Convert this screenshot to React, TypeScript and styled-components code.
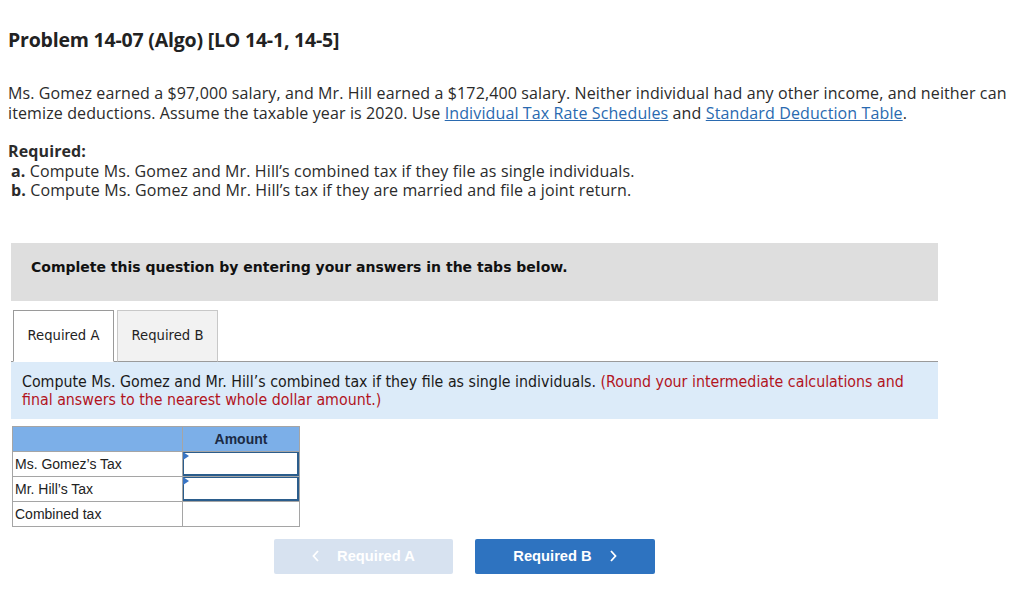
import React, { useState } from "react";
import styled, { createGlobalStyle } from "styled-components";

const GlobalStyle = createGlobalStyle`
	html, body {
		margin: 0;
		padding: 0;
		background: #fff;
	}
	body {
		font-family: "Open Sans", "Lato", sans-serif;
		color: #222;
	}
`;

const Page = styled.div`
	width: 1024px;
	padding: 27px 0 0 8px;
	box-sizing: border-box;
`;

const Title = styled.h2`
	margin: 0;
	font-size: 19.5px;
	font-weight: 700;
	color: #222;
	line-height: 26px;
	letter-spacing: -0.2px;
`;

const Intro = styled.p`
	margin: 30px 0 0;
	font-size: 16px;
	letter-spacing: 0.12px;
	line-height: 20px;
	color: #2b2b2b;
`;

const DocLink = styled.a`
	color: #2a6ab0;
	text-decoration: underline;
`;

const Required = styled.div`
	margin-top: 19px;
	font-size: 16px;
	letter-spacing: 0.12px;
	line-height: 19.5px;
	color: #2b2b2b;
`;

const RequiredHead = styled.div`
	font-weight: 700;
`;

const RequiredItem = styled.div`
	padding-left: 3px;
	b {
		font-weight: 700;
	}
`;

const Panel = styled.div`
	width: 927px;
	margin: 42px 0 0 3px;
	font-family: "DejaVu Sans", Verdana, sans-serif;
`;

const Banner = styled.div`
	height: 58px;
	box-sizing: border-box;
	background: #dedede;
	padding: 16px 0 0 20px;
	font-size: 14px;
	line-height: 17px;
	font-weight: 700;
	color: #111;
`;

const TabRow = styled.div`
	display: flex;
	gap: 3px;
	margin-top: 9px;
	padding-left: 2px;
	border-bottom: 1px solid #9a9a9a;
`;

const Tab = styled.button<{ $active: boolean }>`
	width: 101px;
	height: 52px;
	margin-bottom: -1px;
	font-family: "DejaVu Sans", Verdana, sans-serif;
	font-size: 13.2px;
	color: #222;
	background: ${(p) => (p.$active ? "#fff" : "#f2f2f2")};
	border: 1px solid ${(p) => (p.$active ? "#9a9a9a" : "#c8c8c8")};
	border-bottom: ${(p) => (p.$active ? "1px solid #fff" : "1px solid #9a9a9a")};
	cursor: pointer;
	padding: 0;
`;

const Instruction = styled.div`
	background: #dcebf9;
	padding: 11px 11px 10px;
	font-family: "DejaVu Sans Condensed", "Liberation Sans", sans-serif;
	font-size: 15.8px;
	line-height: 18px;
	color: #1a1a1a;
`;

const Note = styled.span`
	color: #b2141e;
`;

const Table = styled.table`
	margin: 7px 0 0 1px;
	border-collapse: collapse;
	font-family: "Liberation Sans", Arial, sans-serif;
	font-size: 14px;
	color: #222;
`;

const HeadCell = styled.th`
	background: #7cafe8;
	border: 1px solid #a5a5a5;
	height: 24px;
	font-weight: 700;
	font-size: 14px;
	color: #1b2a44;
	padding: 0;
`;

const LabelCell = styled.td`
	width: 167px;
	height: 24px;
	border: 1px solid #a5a5a5;
	padding: 0 0 0 2px;
`;

const InputCell = styled.td`
	position: relative;
	width: 116px;
	border: 1px solid #a5a5a5;
	padding: 0;
`;

const AnswerInput = styled.input`
	display: block;
	box-sizing: border-box;
	width: 100%;
	height: 24px;
	border: 2px solid #2b5d8c;
	border-width: 1px 2px 2px 1px;
	outline: none;
	font-family: "Liberation Sans", Arial, sans-serif;
	font-size: 13px;
	text-align: right;
	padding: 0 4px;
`;

const Marker = styled.span`
	position: absolute;
	left: 0;
	top: 0;
	width: 0;
	height: 0;
	border-top: 4px solid transparent;
	border-bottom: 4px solid transparent;
	border-left: 6px solid #3874c4;
`;

const NavRow = styled.div`
	display: flex;
	gap: 22px;
	margin: 12px 0 0 263px;
`;

const NavButton = styled.button<{ $disabled?: boolean }>`
	width: ${(p) => (p.$disabled ? "179px" : "180px")};
	height: 35px;
	border: none;
	border-radius: 2px;
	background: ${(p) => (p.$disabled ? "#d7e2f0" : "#2e73c0")};
	color: #fff;
	font-family: "Liberation Sans", Arial, sans-serif;
	font-size: 14.7px;
	font-weight: 700;
	display: flex;
	align-items: center;
	justify-content: center;
	gap: 17px;
	cursor: ${(p) => (p.$disabled ? "default" : "pointer")};
`;

const Chevron = styled.svg`
	width: 8px;
	height: 12px;
	fill: none;
	stroke: #fff;
	stroke-width: 1.8;
`;

const rows = ["Ms. Gomez’s Tax", "Mr. Hill’s Tax"];

const App: React.FC = () => {
	const [tab, setTab] = useState("A");

	return (
		<Page>
			<GlobalStyle />
			<Title>Problem 14-07 (Algo) [LO 14-1, 14-5]</Title>
			<Intro>
				Ms. Gomez earned a $97,000 salary, and Mr. Hill earned a $172,400 salary. Neither individual had any
				other income, and neither can itemize deductions. Assume the taxable year is 2020. Use{" "}
				<DocLink href="#">Individual Tax Rate Schedules</DocLink> and{" "}
				<DocLink href="#">Standard Deduction Table</DocLink>.
			</Intro>
			<Required>
				<RequiredHead>Required:</RequiredHead>
				<RequiredItem>
					<b>a.</b> Compute Ms. Gomez and Mr. Hill’s combined tax if they file as single individuals.
				</RequiredItem>
				<RequiredItem>
					<b>b.</b> Compute Ms. Gomez and Mr. Hill’s tax if they are married and file a joint return.
				</RequiredItem>
			</Required>

			<Panel>
				<Banner>Complete this question by entering your answers in the tabs below.</Banner>
				<TabRow>
					<Tab $active={tab === "A"} onClick={() => setTab("A")}>
						Required A
					</Tab>
					<Tab $active={tab === "B"} onClick={() => setTab("B")}>
						Required B
					</Tab>
				</TabRow>
				<Instruction>
					Compute Ms. Gomez and Mr. Hill’s combined tax if they file as single individuals.{" "}
					<Note>(Round your intermediate calculations and final answers to the nearest whole dollar amount.)</Note>
				</Instruction>
				<Table>
					<thead>
						<tr>
							<HeadCell />
							<HeadCell>Amount</HeadCell>
						</tr>
					</thead>
					<tbody>
						{rows.map((r) => (
							<tr key={r}>
								<LabelCell>{r}</LabelCell>
								<InputCell>
									<Marker />
									<AnswerInput />
								</InputCell>
							</tr>
						))}
						<tr>
							<LabelCell>Combined tax</LabelCell>
							<InputCell />
						</tr>
					</tbody>
				</Table>
				<NavRow>
					<NavButton $disabled>
						<Chevron viewBox="0 0 8 12">
							<path d="M6 1 L1.5 6 L6 11" />
						</Chevron>
						Required A
					</NavButton>
					<NavButton>
						Required B
						<Chevron viewBox="0 0 8 12">
							<path d="M2 1 L6.5 6 L2 11" />
						</Chevron>
					</NavButton>
				</NavRow>
			</Panel>
		</Page>
	);
};

export default App;
